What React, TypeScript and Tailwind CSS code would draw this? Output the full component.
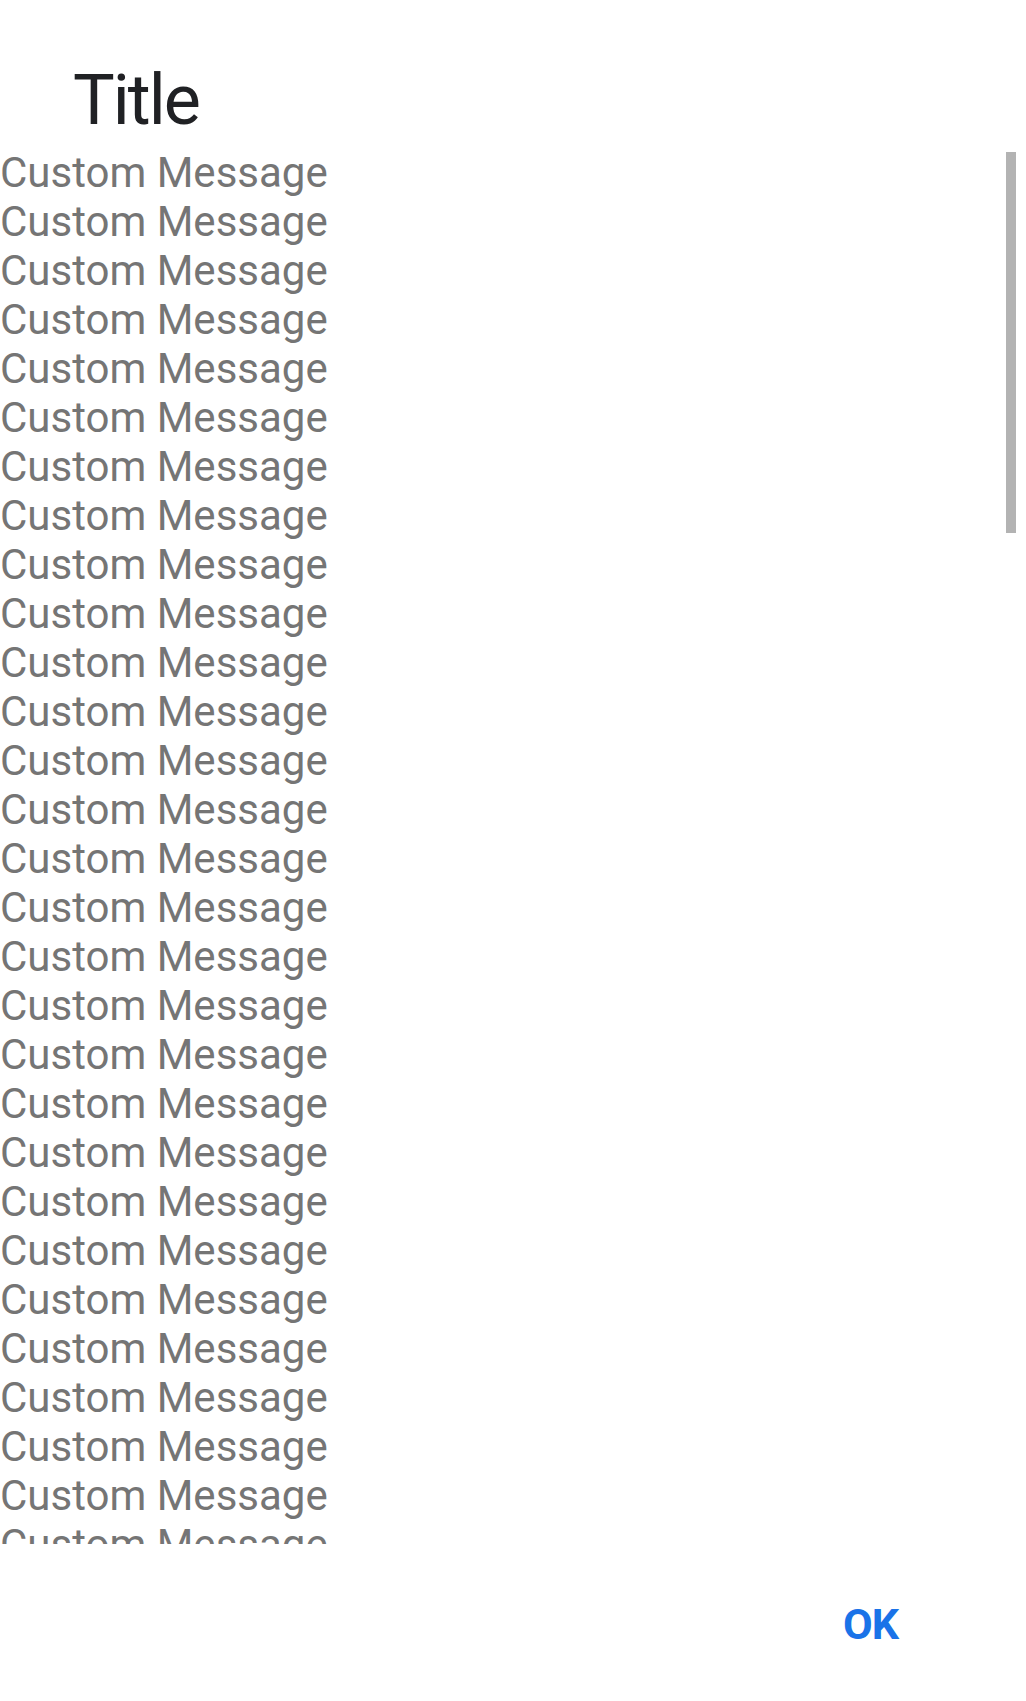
const LINES = Array.from({ length: 100 }, (_, i) => i);

export default function App() {
  return (
    <div className="flex h-[1701px] w-full flex-col bg-white font-['Roboto',sans-serif]">
      <h1 className="pl-[73px] pt-[59px] text-[70px] leading-[82px] tracking-[-2px] font-normal text-[#202124]">Title</h1>

      <div className="relative mt-[7px] h-[1396px] overflow-hidden">
        {LINES.map(i => (
          <div key={i} className="text-[42px] leading-[49px] text-[#757575]">Custom Message</div>
        ))}
        {/* scroll thumb */}
        <div className="absolute right-[10px] top-[4px] h-[381px] w-[10px] bg-[#b3b3b3]" />
      </div>

      <div className="mt-[55px] flex justify-end pr-[128px]">
        <button className="text-[43px] leading-[50px] tracking-[-1px] font-bold text-[#1a73e8]">OK</button>
      </div>
    </div>
  );
}
